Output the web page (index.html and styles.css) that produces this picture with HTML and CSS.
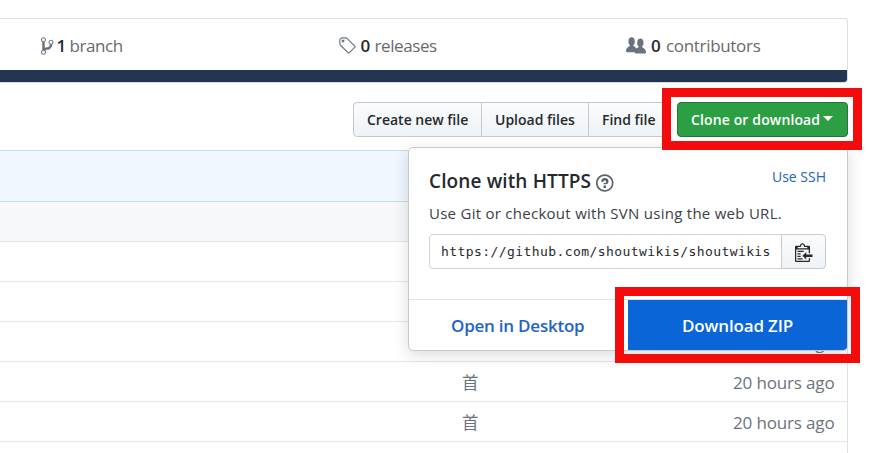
FILE: index.html
```html
<!DOCTYPE html>
<html lang="en">
<head>
<meta charset="utf-8">
<title>Repository</title>
<link rel="stylesheet" href="styles.css">
</head>
<body>
<main class="repo">
  <section class="summary">
    <div class="stats">
      <div class="stat branches">
        <svg class="icon" width="12.5" height="20" viewBox="0 0 10 16"><path fill-rule="evenodd" d="M10 5c0-1.11-.89-2-2-2a1.993 1.993 0 0 0-1 3.72v.3c-.02.52-.23.98-.63 1.38-.4.4-.86.61-1.38.63-.83.02-1.48.16-2 .45V4.72a1.993 1.993 0 0 0-1-3.72C.88 1 0 1.89 0 3a2 2 0 0 0 1 1.72v6.56c-.59.35-1 .99-1 1.72 0 1.11.89 2 2 2 1.11 0 2-.89 2-2 0-.53-.2-1-.53-1.36.09-.06.48-.41.59-.47.25-.11.56-.17.94-.17 1.05-.05 1.95-.45 2.75-1.25S8.95 7.77 9 6.73h-.02C9.59 6.37 10 5.73 10 5zM2 1.8c.66 0 1.2.55 1.2 1.2 0 .65-.55 1.2-1.2 1.2C1.35 4.2.8 3.65.8 3c0-.65.55-1.2 1.2-1.2zm0 12.41c-.66 0-1.2-.55-1.2-1.2 0-.65.55-1.2 1.2-1.2.65 0 1.2.55 1.2 1.2 0 .65-.55 1.2-1.2 1.2zm6-8c-.66 0-1.2-.55-1.2-1.2 0-.65.55-1.2 1.2-1.2.65 0 1.2.55 1.2 1.2 0 .65-.55 1.2-1.2 1.2z"/></svg>
        <b>1</b><span>branch</span>
      </div>
      <div class="stat releases">
        <svg class="icon" width="17.5" height="20" viewBox="0 0 14 16"><path fill-rule="evenodd" d="M7.73 1.73C7.26 1.26 6.62 1 5.96 1H3.5C2.13 1 1 2.13 1 3.5v2.47c0 .66.27 1.3.73 1.77l6.06 6.06c.39.39 1.02.39 1.41 0l4.59-4.59a.996.996 0 0 0 0-1.41L7.73 1.73zM2.38 7.09c-.31-.3-.47-.7-.47-1.13V3.5c0-.88.72-1.59 1.59-1.59h2.47c.42 0 .83.16 1.13.47l6.14 6.13-4.73 4.73-6.13-6.15zM3.01 3h2v2H3V3h.01z"/></svg>
        <b>0</b><span>releases</span>
      </div>
      <div class="stat contributors">
        <svg class="icon" width="20" height="20" viewBox="0 0 16 16"><path fill-rule="evenodd" d="M16 12.999c0 .439-.45 1-1 1H7.995c-.539 0-.994-.447-.995-.999H1c-.54 0-1-.561-1-1 0-2.634 3-4 3-4s.229-.409 0-1c-.841-.621-1.058-.59-1-3 .058-2.419 1.367-3 2.5-3s2.442.58 2.5 3c.058 2.41-.159 2.379-1 3-.229.59 0 1 0 1s1.549.711 2.42 2.088C9.196 9.369 10 8.999 10 8.999s.229-.409 0-1c-.841-.62-1.058-.59-1-3 .058-2.419 1.367-3 2.5-3s2.437.581 2.495 3c.059 2.41-.158 2.38-1 3-.229.59 0 1 0 1s3.005 1.366 3.005 4"/></svg>
        <b>0</b><span>contributors</span>
      </div>
    </div>
    <div class="language-bar"></div>
  </section>

  <div class="actions">
    <div class="button-group">
      <button class="button create">Create new file</button>
      <button class="button upload">Upload files</button>
      <button class="button find">Find file</button>
    </div>
    <div class="clone-menu">
      <button class="button primary">Clone or download<i class="caret"></i></button>
      <div class="highlight highlight-clone"></div>
      <div class="popover">
        <div class="popover-body">
          <div class="heading-row">
            <h4 class="heading">Clone with HTTPS</h4>
            <svg class="help" width="17.5" height="20" viewBox="0 0 14 16"><path fill-rule="evenodd" d="M6 10h2v2H6v-2zm4-3.5C10 8.64 8 9 8 9H6c0-.55.45-1 1-1h.5c.28 0 .5-.22.5-.5v-1c0-.28-.22-.5-.5-.5h-1c-.28 0-.5.22-.5.5V7H4c0-1.5 1.5-3 3-3s3 1 3 2.5zM7 2.3c3.14 0 5.7 2.56 5.7 5.7s-2.56 5.7-5.7 5.7A5.71 5.71 0 0 1 1.3 8c0-3.14 2.56-5.7 5.7-5.7zM7 1C3.14 1 0 4.14 0 8s3.14 7 7 7 7-3.14 7-7-3.14-7-7-7z"/></svg>
            <a class="use-ssh">Use SSH</a>
          </div>
          <p class="hint">Use Git or checkout with SVN using the web URL.</p>
          <div class="url-group">
            <div class="url">https://github.com/shoutwikis/shoutwikis</div>
            <button class="copy"><svg width="17.5" height="20" viewBox="0 0 14 16"><path fill-rule="evenodd" d="M2 13h4v1H2v-1zm5-6H2v1h5V7zm2 3V8l-3 3 3 3v-2h5v-2H9zM4.5 9H2v1h2.5V9zM2 12h2.5v-1H2v1zm9 1h1v2c-.02.28-.11.52-.3.7-.19.18-.42.28-.7.3H1c-.55 0-1-.45-1-1V4c0-.55.45-1 1-1h3c0-1.11.89-2 2-2 1.11 0 2 .89 2 2h3c.55 0 1 .45 1 1v5h-1V6H1v9h10v-2zM2 5h8c0-.55-.45-1-1-1H8c-.55 0-1-.45-1-1s-.45-1-1-1-1 .45-1 1-.45 1-1 1H3c-.55 0-1 .45-1 1z"/></svg></button>
          </div>
        </div>
        <div class="popover-footer">
          <a class="open-desktop">Open in Desktop</a>
          <a class="download">Download ZIP</a>
        </div>
        <div class="highlight highlight-zip"></div>
      </div>
    </div>
  </div>

  <section class="files">
    <div class="commit"></div>
    <div class="row row-head"></div>
    <div class="row"></div>
    <div class="row"></div>
    <div class="row"><span class="message">首</span><span class="age">20 hours ago</span></div>
    <div class="row"><span class="message">首</span><span class="age">20 hours ago</span></div>
    <div class="row"><span class="message">首</span><span class="age">20 hours ago</span></div>
  </section>
</main>
</body>
</html>
```
FILE: styles.css
```css
* { box-sizing: border-box; }

body {
  margin: 0;
  width: 896px;
  height: 453px;
  overflow: hidden;
  background: #fff;
  color: #24292e;
  font-family: "Open Sans", "Noto Sans CJK JP", sans-serif;
}

svg { display: block; fill: currentColor; flex: none; }

.repo { display: flex; flex-direction: column; width: 848px; height: 453px; padding-top: 18px; }

.summary {
  flex: none;
  height: 65px;
  border: 1px solid #dcdddf;
  border-left: 0;
  border-radius: 0 4px 4px 0;
  overflow: hidden;
}

.stats { display: flex; height: 51px; }
.stat { display: flex; align-items: center; color: #666a70; font-size: 17px; line-height: 24px; padding-top: 2px; letter-spacing: -.4px; }
.stat b { width: 10px; margin-right: 4px; color: #24292e; font-weight: 600; }
.stat .icon { color: #6a737d; }
.branches { width: 299px; padding-left: 41px; }
.branches .icon { margin-right: 3px; }
.branches b { margin-right: 3px; }
.releases { width: 287px; padding-left: 39px; }
.releases .icon { margin-right: 5px; }
.contributors { padding-left: 40px; letter-spacing: -.32px; }
.contributors .icon { margin-right: 5px; }
.contributors b { margin-right: 5px; }
.language-bar { height: 12px; background: #233552; }

.actions { display: flex; flex: none; height: 34px; margin-top: 19px; padding-left: 353px; }
.button-group { display: flex; width: 317px; }
.button {
  display: flex;
  align-items: center;
  height: 35px;
  padding: 0 0 0 13px;
  border: 1px solid #c5c9cd;
  color: #24292e;
  background: linear-gradient(#fafbfc, #eff3f6);
  font: 600 14px/20px "Open Sans", sans-serif;
  white-space: nowrap;
}
.create { width: 129px; border-radius: 4px 0 0 4px; }
.upload { width: 108px; margin-left: -1px; }
.find { width: 82px; margin-left: -1px; border-radius: 0 4px 4px 0; }
.clone-menu { position: relative; margin-left: 7px; }
.primary {
  width: 171px;
  color: #fff;
  background: #2c9f45;
  border-color: #28713a;
  border-radius: 4px;
  letter-spacing: .13px;
}
.caret { margin: -2px 0 0 3px; border: 5px solid transparent; border-top-color: #fff; border-bottom: 0; }

.highlight { position: absolute; border: 9px solid #f40b0b; z-index: 3; }
.highlight-clone { left: -15px; top: -14px; width: 200px; height: 62px; }
.highlight-zip { left: 206px; top: 139px; width: 245px; height: 76px; }

.popover {
  position: absolute;
  z-index: 2;
  left: -269px;
  top: 45px;
  width: 440px;
  height: 204px;
  border: 1px solid #c8cacc;
  border-radius: 5px;
  background: #fff;
  box-shadow: 0 4px 15px rgba(27, 31, 35, .16);
}
.popover-body { height: 151px; padding: 19px 21px 0 20px; }
.heading-row { display: flex; height: 32px; }
.heading { margin: 0; font-size: 19px; line-height: 28px; font-weight: 600; letter-spacing: .13px; }
.help { margin: 6px 0 0 5px; color: #586069; }
.use-ssh { margin-left: auto; font-size: 14px; line-height: 20px; color: #2163c6; }
.hint { margin: 2px 0 0; font-size: 15px; line-height: 24px; letter-spacing: .27px; color: #3a4046; height: 33px; white-space: nowrap; }
.url-group { display: flex; height: 35px; }
.url {
  width: 353px;
  padding-left: 11px;
  border: 1px solid #d1d5da;
  border-radius: 4px 0 0 4px;
  font: 13px/33px "DejaVu Sans Mono", monospace;
  letter-spacing: .42px;
}
.copy {
  display: flex;
  align-items: center;
  width: 45px;
  margin-left: -1px;
  padding: 0 0 0 13px;
  border: 1px solid #c8ccd0;
  border-radius: 0 4px 4px 0;
  background: linear-gradient(#fafbfc, #eff3f6);
  color: #24292e;
}
.popover-footer { display: flex; height: 51px; border-top: 1px solid #dfe2e5; font-weight: 600; font-size: 17px; line-height: 51px; letter-spacing: -.15px; }
.open-desktop { width: 219px; color: #2163c6; padding-left: 42px; white-space: nowrap; letter-spacing: -.23px; }
.download { width: 219px; color: #fff; background: #0a65d7; padding-left: 54px; border-radius: 0 0 4px; white-space: nowrap; }

.files { flex: 1; margin-top: 14px; border-right: 1px solid #dfe2e5; }
.commit { height: 52px; background: #f0f7ff; border-top: 1px solid #c8dcf2; border-bottom: 1px solid #c8dde6; }
.row { display: flex; height: 40px; border-bottom: 1px solid #e5e6e8; color: #6a737d; font-size: 17px; line-height: 41px; }
.row-head { background: #f6f8fa; }
.message { width: 271px; margin-left: 462px; font-size: 16.5px; }
.age { white-space: nowrap; letter-spacing: -.15px; }
```
